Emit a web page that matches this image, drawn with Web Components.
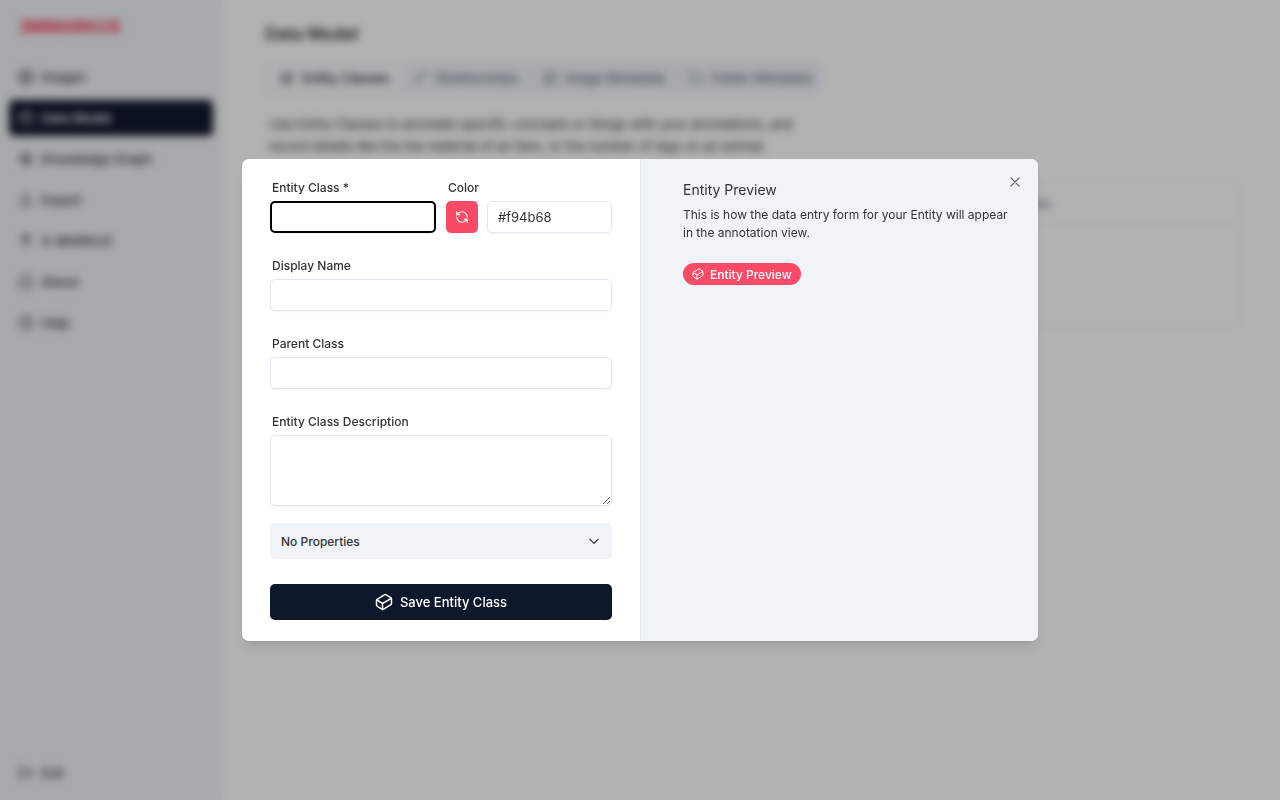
<!DOCTYPE html>
<html lang="en">
<head>
<meta charset="utf-8">
<title>IMMARKUS</title>
<style>
    html, body {
        height: 100%;
        margin: 0;
    }
    body {
        font-family: Inter, "Liberation Sans", sans-serif;
        font-size: 14px;
        color: #333;
        background: #fff;
        overflow: hidden;
    }
</style>
</head>
<body>
<app-shell>
    <app-sidebar slot="sidebar"></app-sidebar>
    <model-page></model-page>
    <modal-dialog slot="dialog">
        <entity-form slot="form"></entity-form>
        <entity-preview slot="preview"></entity-preview>
    </modal-dialog>
</app-shell>

<script>
const ICONS = {
    image: '<rect x="3" y="3" width="18" height="18" rx="2"/><circle cx="9" cy="9" r="2"/><path d="m21 15-3-3a2 2 0 0 0-3 0l-9 9"/>',
    toy: '<rect x="3" y="8" width="18" height="12" rx="1"/><path d="M10 8V5c0-.6-.4-1-1-1H6a1 1 0 0 0-1 1v3M19 8V5c0-.6-.4-1-1-1h-3a1 1 0 0 0-1 1v3"/>',
    graph: '<circle cx="12" cy="4.500" r="2.500"/><path d="m10.200 6.300-3.900 3.900"/><circle cx="4.500" cy="12" r="2.500"/><path d="M7 12h10"/><circle cx="19.500" cy="12" r="2.500"/><path d="m13.800 17.700 3.900-3.900"/><circle cx="12" cy="19.500" r="2.500"/>',
    export: '<path d="M4 14v4a2 2 0 0 0 2 2h12a2 2 0 0 0 2-2v-4M12 15V4M8 8l4-4 4 4"/>',
    pin: '<circle cx="12" cy="8" r="5"/><path d="M12 13v8M12 6v4"/>',
    info: '<circle cx="12" cy="12" r="10"/><path d="M12 16v-4M12 8h.01"/>',
    help: '<circle cx="12" cy="12" r="10"/><path d="M9 9a3 3 0 0 1 5.800 1c0 2-3 3-3 3M12 17h.01"/>',
    exit: '<path d="M9 21H5a2 2 0 0 1-2-2V5a2 2 0 0 1 2-2h4M16 17l5-5-5-5M21 12H9"/>',
    entity: '<path d="m21.120 6.400-6.050-4.060a2 2 0 0 0-2.170-.05L2.950 8.410a2 2 0 0 0-.95 1.700v5.820a2 2 0 0 0 .88 1.660l6.050 4.070a2 2 0 0 0 2.170.05l9.950-6.120a2 2 0 0 0 .95-1.700V8.060a2 2 0 0 0-.88-1.660Z"/><path d="M10 22v-8L2.250 9.150M10 14l11.770-6.870"/>',
    spline: '<circle cx="19" cy="5" r="2"/><circle cx="5" cy="19" r="2"/><path d="M5 17A12 12 0 0 1 17 5"/>',
    folder: '<path d="M20 20a2 2 0 0 0 2-2V8a2 2 0 0 0-2-2h-7.900a2 2 0 0 1-1.690-.9L9.600 3.900A2 2 0 0 0 7.930 3H4a2 2 0 0 0-2 2v13a2 2 0 0 0 2 2Z"/>',
    refresh: '<path d="M21 12a9 9 0 0 0-9-9 9.750 9.750 0 0 0-6.740 2.740L3 8"/><path d="M3 3v5h5M3 12a9 9 0 0 0 9 9 9.750 9.750 0 0 0 6.740-2.740L21 16"/><path d="M16 16h5v5"/>',
    chevron: '<path d="m5 9 7 7 7-7"/>',
    close: '<path d="M5 5l14 14M19 5 5 19"/>'
};

class UiIcon extends HTMLElement {
    constructor() {
        super();
        this.attachShadow({ mode: 'open' });
    }

    connectedCallback() {
        this.shadowRoot.innerHTML = `
            <style>
                :host {
                    display: inline-flex;
                    flex: none;
                    width: 16px;
                    height: 16px;
                }
                svg {
                    width: 100%;
                    height: 100%;
                    fill: none;
                    stroke: currentColor;
                    stroke-width: 2;
                    stroke-linecap: round;
                    stroke-linejoin: round;
                }
            </style>
            <svg viewBox="0 0 24 24" aria-hidden="true">${ICONS[this.getAttribute('name')] || ''}</svg>
        `;
    }
}

class AppShell extends HTMLElement {
    constructor() {
        super();
        this.attachShadow({ mode: 'open' });
        this.shadowRoot.innerHTML = `
            <style>
                :host {
                    display: block;
                    height: 100%;
                }
                .page {
                    display: flex;
                    height: 100%;
                }
                main {
                    flex: 1;
                    min-width: 0;
                }
                .overlay {
                    position: fixed;
                    inset: 0;
                    display: flex;
                    align-items: center;
                    justify-content: center;
                    background: rgba(0, 0, 0, 0.3);
                    backdrop-filter: blur(4px);
                }
            </style>
            <div class="page">
                <slot name="sidebar"></slot>
                <main><slot></slot></main>
            </div>
            <div class="overlay"><slot name="dialog"></slot></div>
        `;
    }
}

class AppSidebar extends HTMLElement {
    constructor() {
        super();
        this.attachShadow({ mode: 'open' });
        const items = [
            ['image', 'Images'],
            ['toy', 'Data Model'],
            ['graph', 'Knowledge Graph'],
            ['export', 'Export'],
            ['pin', 'X-MARKUS'],
            ['info', 'About'],
            ['help', 'Help']
        ];
        this.shadowRoot.innerHTML = `
            <style>
                :host {
                    display: flex;
                    flex-direction: column;
                    box-sizing: border-box;
                    flex: none;
                    width: 222px;
                    padding: 15px 9px 9px;
                    background: #f0f5f9;
                }
                .logo {
                    margin: 0 0 20px 11px;
                    font-size: 17px;
                    line-height: 24px;
                    font-weight: 800;
                    font-feature-settings: "ss02", "cv08";
                    color: #f94b68;
                }
                nav {
                    display: flex;
                    flex-direction: column;
                    flex: 1;
                    gap: 5px;
                }
                a {
                    display: flex;
                    align-items: center;
                    gap: 7px;
                    height: 36px;
                    padding: 0 9px;
                    border-radius: 5px;
                    font-size: 13px;
                    font-weight: 500;
                    color: #333;
                    text-decoration: none;
                }
                a.active {
                    background: #0f172a;
                    color: #fff;
                }
                a.exit {
                    margin-top: auto;
                }
            </style>
            <div class="logo">IMMARKUS</div>
            <nav>
                ${items.map(([icon, text]) => `<a href="#"${text === 'Data Model' ? ' class="active"' : ''}><ui-icon name="${icon}"></ui-icon>${text}</a>`).join('')}
                <a href="#" class="exit"><ui-icon name="exit"></ui-icon>Exit</a>
            </nav>
        `;
    }
}

class ModelPage extends HTMLElement {
    constructor() {
        super();
        this.attachShadow({ mode: 'open' });
        this.shadowRoot.innerHTML = `
            <style>
                :host {
                    display: block;
                    padding: 22px 40px 0 43px;
                }
                h1 {
                    margin: 0 0 16px;
                    font-size: 17px;
                    line-height: 24px;
                    font-weight: 600;
                }
                .tabs {
                    display: inline-flex;
                    padding: 4px;
                    border-radius: 5px;
                    background: #f0f5f9;
                }
                button {
                    display: flex;
                    align-items: center;
                    gap: 8px;
                    height: 24px;
                    padding: 0 13px 0 11px;
                    border: 0;
                    border-radius: 3px;
                    background: none;
                    font: 500 13px Inter, sans-serif;
                    color: #64748b;
                }
                button:last-child {
                    padding-right: 5px;
                }
                button ui-icon {
                    width: 14px;
                    height: 14px;
                }
                button.active {
                    background: #fff;
                    color: #0f172a;
                }
                p {
                    max-width: 550px;
                    margin: 19px 0 0 4px;
                    font-size: 13px;
                    line-height: 22px;
                }
                .panel {
                    height: 144px;
                    margin-top: 24px;
                    border: 1px solid #e8edf4;
                    border-radius: 6px;
                }
                table {
                    width: 100%;
                    border-collapse: collapse;
                }
                th {
                    height: 42px;
                    padding: 0 14px;
                    border-bottom: 1px solid #e8edf4;
                    font-size: 12px;
                    font-weight: 500;
                    text-align: right;
                    color: #64748b;
                }
                th span {
                    padding-right: 174px;
                }
            </style>
            <h1>Data Model</h1>
            <div class="tabs" role="tablist">
                <button role="tab" class="active"><ui-icon name="entity"></ui-icon>Entity Classes</button>
                <button role="tab"><ui-icon name="spline"></ui-icon>Relationships</button>
                <button role="tab"><ui-icon name="image"></ui-icon>Image Metadata</button>
                <button role="tab"><ui-icon name="folder"></ui-icon>Folder Metadata</button>
            </div>
            <p>Use Entity Classes to annotate specific concepts or things with your annotations, and record details like the the material of an item, or the number of legs on an animal.</p>
            <div class="panel">
                <table><tr><th><span>Properties</span></th></tr></table>
            </div>
        `;
    }
}

class ModalDialog extends HTMLElement {
    constructor() {
        super();
        this.attachShadow({ mode: 'open' });
        this.shadowRoot.innerHTML = `
            <style>
                :host {
                    display: block;
                    width: 796px;
                    max-width: 96%;
                }
                .dialog {
                    position: relative;
                    display: grid;
                    grid-template-columns: 1fr 1fr;
                    overflow: hidden;
                    border-radius: 7px;
                    background: #fff;
                    box-shadow: 0 9px 14px -3px rgba(0, 0, 0, 0.1), 0 4px 6px -4px rgba(0, 0, 0, 0.1);
                }
                .close {
                    position: absolute;
                    top: 15px;
                    right: 15px;
                    display: flex;
                    padding: 1px;
                    border: 0;
                    background: none;
                    color: #555;
                }
                .close ui-icon {
                    width: 14px;
                    height: 14px;
                }
            </style>
            <div class="dialog" role="dialog" aria-modal="true" aria-label="Entity Class">
                <slot name="form"></slot>
                <slot name="preview"></slot>
                <button class="close" aria-label="Close"><ui-icon name="close"></ui-icon></button>
            </div>
        `;
    }
}

class EntityForm extends HTMLElement {
    constructor() {
        super();
        this.attachShadow({ mode: 'open' });
        this.shadowRoot.innerHTML = `
            <style>
                * {
                    box-sizing: border-box;
                }
                :host {
                    display: block;
                    padding: 20px 28px 21px;
                }
                form {
                    display: flex;
                    flex-direction: column;
                }
                .top {
                    display: grid;
                    grid-template-columns: 166px 1fr;
                    gap: 10px;
                }
                .field {
                    display: flex;
                    flex-direction: column;
                    gap: 5px;
                    margin-bottom: 24px;
                }
                .field.last {
                    margin-bottom: 17px;
                }
                label {
                    padding-left: 2px;
                    font-size: 12px;
                    line-height: 17px;
                    font-weight: 500;
                }
                input, textarea {
                    display: block;
                    width: 100%;
                    min-width: 0;
                    height: 32px;
                    margin: 0;
                    padding: 0 10px;
                    border: 1px solid #e2e8f0;
                    border-radius: 5px;
                    outline: none;
                    background: #fff;
                    box-shadow: 0 1px 2px rgba(0, 0, 0, 0.05);
                    font: 13px Inter, sans-serif;
                    color: #333;
                }
                textarea {
                    height: 71px;
                    padding: 8px 10px;
                }
                #name {
                    border: 2px solid #000;
                }
                .color {
                    display: flex;
                    gap: 9px;
                }
                button {
                    display: flex;
                    align-items: center;
                    height: 36px;
                    border: 0;
                    border-radius: 5px;
                    font: 500 13px Inter, sans-serif;
                    color: #fff;
                }
                .swatch {
                    flex: none;
                    justify-content: center;
                    width: 32px;
                    height: 32px;
                    padding: 0;
                    background: #f94b68;
                }
                .swatch ui-icon {
                    width: 14px;
                    height: 14px;
                }
                .props {
                    justify-content: space-between;
                    margin-bottom: 25px;
                    padding: 0 11px;
                    background: #f0f4f9;
                    font-size: 12px;
                    color: #333;
                }
                .props ui-icon {
                    width: 14px;
                    height: 14px;
                }
                .save {
                    justify-content: center;
                    gap: 7px;
                    background: #0f172a;
                }
                .save ui-icon {
                    width: 18px;
                    height: 18px;
                }
            </style>
            <form>
                <div class="top">
                    <div class="field">
                        <label for="name">Entity Class *</label>
                        <input id="name" type="text">
                    </div>
                    <div class="field">
                        <label for="color">Color</label>
                        <div class="color">
                            <button type="button" class="swatch" aria-label="Random color"><ui-icon name="refresh"></ui-icon></button>
                            <input id="color" type="text" value="#f94b68">
                        </div>
                    </div>
                </div>
                <div class="field">
                    <label for="display">Display Name</label>
                    <input id="display" type="text">
                </div>
                <div class="field">
                    <label for="parent">Parent Class</label>
                    <input id="parent" type="text">
                </div>
                <div class="field last">
                    <label for="description">Entity Class Description</label>
                    <textarea id="description"></textarea>
                </div>
                <button type="button" class="props">No Properties<ui-icon name="chevron"></ui-icon></button>
                <button type="button" class="save"><ui-icon name="entity"></ui-icon>Save Entity Class</button>
            </form>
        `;
    }
}

class EntityPreview extends HTMLElement {
    constructor() {
        super();
        this.attachShadow({ mode: 'open' });
        this.shadowRoot.innerHTML = `
            <style>
                :host {
                    display: block;
                    padding: 20px 24px 20px 42px;
                    border-left: 1px solid #e2e8f0;
                    background: #f0f4f9;
                }
                h2 {
                    margin: 0 0 5px;
                    font-size: 14px;
                    line-height: 22px;
                    font-weight: 400;
                }
                p {
                    margin: 0 0 21px;
                    font-size: 12px;
                    line-height: 18px;
                }
                .badge {
                    display: inline-flex;
                    align-items: center;
                    gap: 6px;
                    height: 22px;
                    padding: 0 9px;
                    border-radius: 11px;
                    background: #f94b68;
                    font-size: 12px;
                    font-weight: 500;
                    color: #fff;
                }
                .badge ui-icon {
                    width: 12px;
                    height: 12px;
                }
            </style>
            <h2>Entity Preview</h2>
            <p>This is how the data entry form for your Entity will appear in the annotation view.</p>
            <span class="badge"><ui-icon name="entity"></ui-icon>Entity Preview</span>
        `;
    }
}

customElements.define('ui-icon', UiIcon);
customElements.define('app-shell', AppShell);
customElements.define('app-sidebar', AppSidebar);
customElements.define('model-page', ModelPage);
customElements.define('modal-dialog', ModalDialog);
customElements.define('entity-form', EntityForm);
customElements.define('entity-preview', EntityPreview);
</script>
</body>
</html>
